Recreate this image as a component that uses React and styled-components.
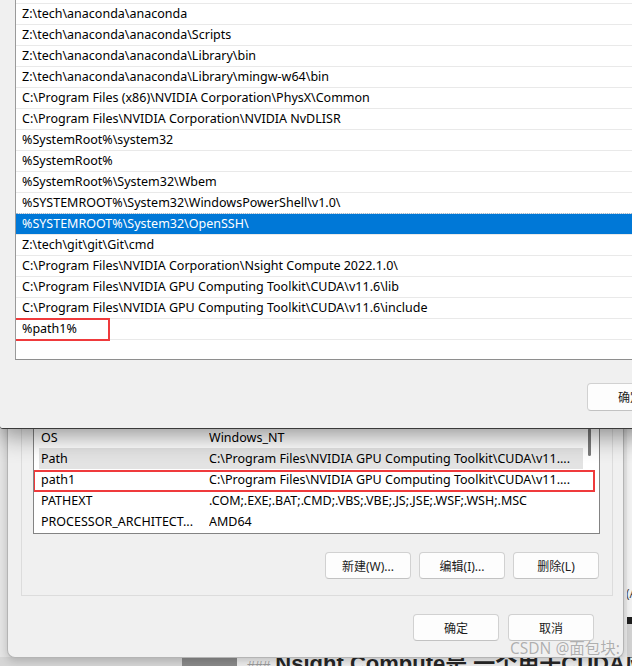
import React from 'react';
import styled, { createGlobalStyle } from 'styled-components';

const GlobalStyle = createGlobalStyle`
  html, body { margin: 0; padding: 0; }
  body {
    width: 632px;
    height: 666px;
    overflow: hidden;
    background: #d8d8d8;
    font-family: "Noto Sans", "Noto Sans CJK SC", sans-serif;
  }
`;

const UI_FONT = `"Noto Sans", "Noto Sans CJK SC", sans-serif`;

const Desktop = styled.div`
  position: relative;
  width: 632px;
  height: 666px;
  overflow: hidden;
  background: #d8d8d8;
`;

/* ---------- backdrop (windows behind) ---------- */
const Backdrop = styled.div`
  display: flex;
  flex-direction: column;
  width: 100%;
  height: 100%;
`;

const BackdropUpper = styled.div`
  flex: 1;
  display: flex;
`;

const BackdropFill = styled.div`
  flex: 1;
  background: #e4e4e4;
`;

const SideWindow = styled.div`
  width: 9px;
  display: flex;
  flex-direction: column;
  background: #f2f2f2;
  border-left: 4px solid #e9e9e9;
  box-sizing: border-box;
  overflow: hidden;
`;

const SideTop = styled.div`
  height: 586px;
  flex-shrink: 0;
`;

const SideLabel = styled.div`
  height: 16px;
  font: 12px ${UI_FONT};
  color: #444;
  line-height: 16px;
  white-space: nowrap;
  margin-left: -1px;
`;

const SideBand = styled.div`
  height: 7px;
  margin-top: 15px;
  background: #1e1e1e;
`;

const SideRest = styled.div`
  flex: 1;
  background: #d2d2d2;
`;

const BackdropStrip = styled.div`
  height: 9px;
  display: flex;
  flex-shrink: 0;
`;

const StripPart = styled.div`
  width: ${p => (p.$w ? `${p.$w}px` : 'auto')};
  flex: ${p => (p.$w ? '0 0 auto' : '1')};
  background: ${p => p.$bg};
  overflow: hidden;
`;

const EditorHeading = styled.div`
  margin: -4px 0 0 10px;
  font: bold 22px/22px "Liberation Sans", "Noto Sans CJK SC", sans-serif;
  color: #262626;
  white-space: nowrap;
`;

const Hashes = styled.span`
  color: #9a9a9a;
  font-weight: normal;
  font-size: 14px;
  margin-right: 5px;
`;

/* ---------- shared controls ---------- */
const Button = styled.button`
  width: 86px;
  height: ${p => p.$h || 27}px;
  box-sizing: border-box;
  flex-shrink: 0;
  border: 1px solid #d1d1d1;
  border-bottom-color: #c2c2c2;
  border-radius: 4px;
  background: #fdfdfd;
  font: 12px ${UI_FONT};
  color: #1b1b1b;
  padding: 0;
`;

const Annotation = styled.div`
  position: absolute;
  box-sizing: border-box;
  border: 2px solid #ef3a3c;
  pointer-events: none;
  left: ${p => p.$l}px;
  top: ${p => p.$t}px;
  width: ${p => p.$w}px;
  height: ${p => p.$h}px;
`;

/* ---------- edit environment variable window (front) ---------- */
const EditWindow = styled.section`
  position: absolute;
  left: 0;
  top: 0;
  z-index: 2;
  width: 700px;
  height: 429px;
  box-sizing: border-box;
  background: #f0f0f0;
  border-bottom: 1px solid #3a3a3a;
  border-bottom-left-radius: 3px;
  box-shadow: 0 6px 26px rgba(0, 0, 0, 0.45);
  display: flex;
  flex-direction: column;
`;

const PathList = styled.div`
  margin-left: 15px;
  height: 360px;
  box-sizing: border-box;
  background: #fff;
  border-left: 1px solid #9a9a9a;
  border-bottom: 1px solid #8e8e8e;
  overflow: hidden;
  flex-shrink: 0;
`;

const PathRows = styled.div`
  margin-top: -17px;
  display: flex;
  flex-direction: column;
`;

const PathRow = styled.div`
  position: relative;
  height: 21px;
  box-sizing: border-box;
  border-bottom: 1px solid #e9e9e9;
  padding-left: 6px;
  font: 12.5px/20px ${UI_FONT};
  color: ${p => (p.$selected ? '#fff' : '#000')};
  background: ${p => (p.$selected ? '#0078d7' : 'transparent')};
  white-space: nowrap;
  &::before {
    content: '';
    display: ${p => (p.$selected ? 'block' : 'none')};
    position: absolute;
    left: 0;
    right: 0;
    top: -1px;
    border-top: 1px dotted #9fb8d0;
  }
`;

const EditFooter = styled.div`
  display: flex;
  padding: 23px 0 0 587px;
`;

/* ---------- environment variables window (behind) ---------- */
const EnvWindow = styled.section`
  position: absolute;
  left: 7px;
  top: 400px;
  z-index: 1;
  width: 617px;
  height: 258px;
  box-sizing: border-box;
  background: #f0f0f0;
  border: 1px solid #b4b4b4;
  border-top: none;
  border-radius: 0 0 8px 8px;
  box-shadow: 0 3px 8px rgba(0, 0, 0, 0.18);
  display: flex;
  flex-direction: column;
`;

const GroupBox = styled.div`
  margin: 0 10px 0 13px;
  border: 1px solid #dcdcdc;
  border-top: none;
  padding: 0 12px 16px 11px;
  display: flex;
  flex-direction: column;
`;

const VarList = styled.div`
  height: 134px;
  box-sizing: border-box;
  background: #fff;
  border: 1px solid #838383;
  border-top: none;
  display: flex;
  overflow: hidden;
`;

const VarRows = styled.div`
  flex: 1;
  margin-left: 5px;
  padding-top: 6px;
  display: flex;
  flex-direction: column;
`;

const VarRow = styled.div`
  position: relative;
  height: 21px;
  display: flex;
  align-items: center;
  padding-left: 2px;
  font: 12.5px/21px ${UI_FONT};
  color: #000;
  background: ${p => (p.$dim ? '#e3e3e3' : 'transparent')};
  white-space: nowrap;
`;

const VarName = styled.span`
  width: 168px;
  flex-shrink: 0;
  overflow: hidden;
`;

const VarValue = styled.span`
  flex: 1;
  overflow: hidden;
`;

const ScrollTrack = styled.div`
  width: 16px;
  flex-shrink: 0;
  display: flex;
  justify-content: flex-start;
  padding-left: 5px;
  box-sizing: border-box;
`;

const ScrollThumb = styled.div`
  width: 3px;
  height: 28px;
  margin-top: 28px;
  border-radius: 2px;
  background: #7a7a7a;
`;

const ActionRow = styled.div`
  margin-top: 18px;
  margin-right: 1px;
  display: flex;
  justify-content: flex-end;
  gap: 8px;
`;

const DialogButtons = styled.div`
  margin-top: 18px;
  padding-right: 29px;
  display: flex;
  justify-content: flex-end;
  gap: 9px;
`;

const Watermark = styled.div`
  position: absolute;
  z-index: 3;
  right: 12px;
  bottom: 9px;
  font: 15.5px/18px ${UI_FONT};
  color: rgba(150, 150, 150, 0.75);
  text-shadow: 0 0 1px rgba(255, 255, 255, 0.8);
  white-space: nowrap;
`;

const paths = [
  'Z:\\tech\\anaconda',
  'Z:\\tech\\anaconda\\anaconda',
  'Z:\\tech\\anaconda\\anaconda\\Scripts',
  'Z:\\tech\\anaconda\\anaconda\\Library\\bin',
  'Z:\\tech\\anaconda\\anaconda\\Library\\mingw-w64\\bin',
  'C:\\Program Files (x86)\\NVIDIA Corporation\\PhysX\\Common',
  'C:\\Program Files\\NVIDIA Corporation\\NVIDIA NvDLISR',
  '%SystemRoot%\\system32',
  '%SystemRoot%',
  '%SystemRoot%\\System32\\Wbem',
  '%SYSTEMROOT%\\System32\\WindowsPowerShell\\v1.0\\',
  '%SYSTEMROOT%\\System32\\OpenSSH\\',
  'Z:\\tech\\git\\git\\Git\\cmd',
  'C:\\Program Files\\NVIDIA Corporation\\Nsight Compute 2022.1.0\\',
  'C:\\Program Files\\NVIDIA GPU Computing Toolkit\\CUDA\\v11.6\\lib',
  'C:\\Program Files\\NVIDIA GPU Computing Toolkit\\CUDA\\v11.6\\include',
  '%path1%',
  '',
];

const vars = [
  ['NUMBER_OF_PROCESSORS', '16'],
  ['OS', 'Windows_NT'],
  ['Path', 'C:\\Program Files\\NVIDIA GPU Computing Toolkit\\CUDA\\v11....', 'dim'],
  ['path1', 'C:\\Program Files\\NVIDIA GPU Computing Toolkit\\CUDA\\v11....', 'mark'],
  ['PATHEXT', '.COM;.EXE;.BAT;.CMD;.VBS;.VBE;.JS;.JSE;.WSF;.WSH;.MSC'],
  ['PROCESSOR_ARCHITECT...', 'AMD64'],
];

export default function App() {
  return (
    <>
      <GlobalStyle />
      <Desktop>
        <Backdrop>
          <BackdropUpper>
            <BackdropFill />
            <SideWindow>
              <SideTop />
              <SideLabel>(A</SideLabel>
              <SideBand />
              <SideRest />
            </SideWindow>
          </BackdropUpper>
          <BackdropStrip>
            <StripPart $w={182} $bg="#d6d6d6" />
            <StripPart $w={55} $bg="#8a8a8a" />
            <StripPart $bg="#ececec">
              <EditorHeading>
                <Hashes>###</Hashes>Nsight Compute是 一个用于CUDA应用
              </EditorHeading>
            </StripPart>
          </BackdropStrip>
        </Backdrop>

        <EnvWindow>
          <GroupBox>
            <VarList>
              <VarRows>
                {vars.map(([name, value, flag]) => (
                  <VarRow key={name} $dim={flag === 'dim'}>
                    <VarName>{name}</VarName>
                    <VarValue>{value}</VarValue>
                    {flag === 'mark' && <Annotation $l={-6} $t={1} $w={562} $h={22} />}
                  </VarRow>
                ))}
              </VarRows>
              <ScrollTrack>
                <ScrollThumb />
              </ScrollTrack>
            </VarList>
            <ActionRow>
              <Button>新建(W)...</Button>
              <Button>编辑(I)...</Button>
              <Button>删除(L)</Button>
            </ActionRow>
          </GroupBox>
          <DialogButtons>
            <Button>确定</Button>
            <Button>取消</Button>
          </DialogButtons>
        </EnvWindow>

        <EditWindow>
          <PathList>
            <PathRows>
              {paths.map((p, i) => (
                <PathRow key={i} $selected={i === 11}>
                  {p}
                  {p === '%path1%' && <Annotation $l={-8} $t={-1} $w={102} $h={23} />}
                </PathRow>
              ))}
            </PathRows>
          </PathList>
          <EditFooter>
            <Button $h={28}>确定</Button>
          </EditFooter>
        </EditWindow>

        <Watermark>CSDN @面包块:</Watermark>
      </Desktop>
    </>
  );
}
